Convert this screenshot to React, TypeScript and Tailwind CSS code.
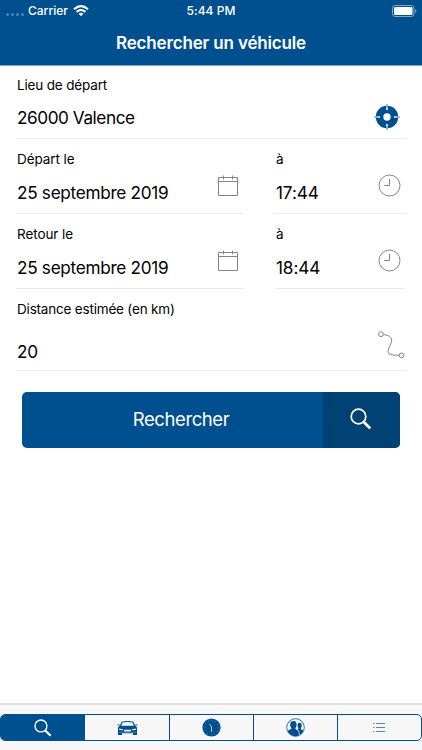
import React from 'react';

function Search({ size }: { size: number }) {
  return (
    <svg width={size} height={size} viewBox="0 0 22 22" fill="none" stroke="white">
      <circle cx="8.5" cy="8.5" r="7.3" strokeWidth="1.7" />
      <path d="M13.800 14 20.300 20.500" strokeWidth="2.7" />
    </svg>
  );
}

function Calendar() {
  return (
    <svg width="21" height="21" viewBox="0 0 21 21" fill="none" stroke="#858585" strokeWidth="1">
      <path d="M.5 2.500h19v18H.5zM.5 6.500h19M5.500 .5v4M14.500 .5v4" />
    </svg>
  );
}

function Clock() {
  return (
    <svg width="23" height="23" viewBox="0 0 23 23" fill="none" stroke="#858585" strokeWidth="1">
      <circle cx="11.5" cy="11.5" r="10.500" />
      <path d="M11.500 5v6.500H6.300" />
    </svg>
  );
}

function DateRow({ label, time }: { label: string; time: string }) {
  return (
    <div className="flex h-[75px] justify-between">
      <div className="flex h-[75px] w-[227px] justify-between border-b border-[#e9e9e9]">
        <div className="pl-px">
          <div className="pt-[10px] text-[13.500px] leading-5 tracking-[-0.08px]">{label}</div>
          <div className="pt-[12px] text-[17.200px] leading-6 tracking-[-0.3px]">25 septembre 2019</div>
        </div>
        <div className="pr-1 pt-[36px]"><Calendar /></div>
      </div>
      <div className="flex h-[75px] w-[130px] justify-between border-b border-[#e9e9e9]">
        <div className="pl-px">
          <div className="pt-[10px] text-[13.500px] leading-5">à</div>
          <div className="pt-[12px] text-[17.200px] leading-6 tracking-[-0.12px]">{time}</div>
        </div>
        <div className="pr-1 pt-[35px]"><Clock /></div>
      </div>
    </div>
  );
}

export default function App() {
  return (
    <div className="flex h-[750px] w-[422px] flex-col overflow-hidden bg-white font-['Inter',sans-serif] text-black">
      <header className="h-[66px] shrink-0 border-b border-[#7da4c4] bg-[#00508f] text-white">
        <div className="grid h-[21px] grid-cols-3 items-center text-[12px] font-medium">
          <div className="flex items-center pl-[6px]">
            <div className="mr-1 flex gap-[2px] pt-[7px]">
              <i className="size-[3px] rounded-full bg-[#4c83b0]" />
              <i className="size-[3px] rounded-full bg-[#4c83b0]" />
              <i className="size-[3px] rounded-full bg-[#4c83b0]" />
              <i className="size-[3px] rounded-full bg-[#4c83b0]" />
            </div>
            <span>Carrier</span>
            <svg className="ml-[5px]" width="16" height="12" viewBox="0 0 16 12" fill="none" stroke="white" strokeWidth="2.1">
              <path d="M1 4.200q7-6.100 14 0M3.600 6.900q4.400-3.800 8.800 0" />
              <path d="M5.600 8.800q2.400-2 4.800 0L8 11.300z" fill="white" stroke="none" />
            </svg>
          </div>
          <div className="text-center tracking-[0.050px]">5:44 PM</div>
          <div className="flex justify-end pr-[5px]">
            <svg width="25" height="12" viewBox="0 0 25 12">
              <rect x=".5" y=".5" width="21.5" height="11" rx="2.7" fill="none" stroke="#85a9c7" />
              <rect x="2" y="2" width="18.5" height="8" rx="1.3" fill="white" />
              <path d="M23.200 4q2.400 2 0 4z" fill="#85a9c7" />
            </svg>
          </div>
        </div>
        <h1 className="pt-[10px] text-center text-[17px] font-semibold leading-6 tracking-[-0.16px]">Rechercher un véhicule</h1>
      </header>

      <main className="flex-1 pl-4 pr-4">
        <div className="flex h-[73px] w-[389px] justify-between border-b border-[#e9e9e9]">
          <div className="pl-px">
            <div className="pt-[9px] text-[13.500px] leading-5 tracking-[-0.16px]">Lieu de départ</div>
            <div className="pt-[11px] text-[17.200px] leading-6 tracking-[-0.440px]">26000 Valence</div>
          </div>
          <svg className="mr-[5px] mt-[38px]" width="26" height="26" viewBox="0 0 26 26">
            <circle cx="13" cy="13" r="11.200" fill="#00508f" />
            <circle cx="13" cy="13" r="3.700" fill="white" />
            <path d="M13 1.500v4.500M13 20v4.500M1.500 13H6M20 13h4.500" stroke="white" strokeWidth="1.600" />
            <path d="M13 0v4M13 22v4M0 13h4M22 13h4" stroke="#00508f" strokeWidth=".7" />
          </svg>
        </div>
        <div className="w-[389px]">
          <DateRow label="Départ le" time="17:44" />
          <DateRow label="Retour le" time="18:44" />
        </div>
        <div className="flex h-[82px] w-[389px] justify-between border-b border-[#e9e9e9]">
          <div className="pl-px">
            <div className="pt-[10px] text-[13.500px] leading-5 tracking-[-0.190px]">Distance estimée (en km)</div>
            <div className="pt-[21px] text-[17.200px] leading-6 tracking-[-0.300px]">20</div>
          </div>
          <svg className="mt-[42px]" width="27" height="28" viewBox="0 0 27 28" fill="none" stroke="#858585">
            <circle cx="3" cy="3.200" r="2.400" />
            <circle cx="23.600" cy="24.400" r="2.400" />
            <path d="M5.500 3.500c7 1 9.800 3.800 7.200 9.600-3 5.500-4.800 10.800 2.700 10.800l5.800.5" />
          </svg>
        </div>
        <button className="ml-[6px] mt-[21px] flex h-[56px] w-[378px] overflow-hidden rounded-[5px] bg-[#00508f] text-white">
          <span className="flex h-full w-[301px] items-center justify-center pl-[17px] text-[18.500px] tracking-[-0.420px]">Rechercher</span>
          <span className="flex h-full flex-1 items-center justify-center bg-[#004274] pb-[3px] pr-px"><Search size={22} /></span>
        </button>
      </main>

      <nav className="h-[47px] shrink-0 border-t-2 border-[#dfdfdf] bg-[#f7f7f7] pt-[9px]">
        <div className="flex h-[27px] overflow-hidden rounded-[5px] border border-[#00508f]">
          <div className="flex w-[84px] items-center justify-center bg-[#00508f]"><Search size={18} /></div>
          <div className="flex w-[84px] items-center justify-center">
            <svg width="21" height="16" viewBox="0 0 21 16">
              <path d="M4.700 1.700Q10.500.300 16.300 1.700L18.200 5.500 20 7.500V15h-4v-1.700H5V15H1V7.500l1.800-2z" fill="#00508f" />
              <path d="M5.600 2.600q4.900-1 9.800 0l1.500 3.200H4.100zM2 8.500l3.600.7.500 1-3.600-.3zM19 8.500l-3.600.7-.5 1 3.600-.3zM6.700 9.800h7.600l-.8 1.800h-6z" fill="#f7f7f7" />
              <path d="M.5 5h2.200M18.300 5h2.200" stroke="#00508f" />
              <path d="M2 12.300h17" stroke="#7ba1c2" strokeWidth=".6" />
            </svg>
          </div>
          <div className="flex w-[84px] items-center justify-center border-l border-[#00508f]">
            <svg className="-ml-px" width="19" height="19" viewBox="0 0 19 19" fill="none">
              <circle cx="9.500" cy="9.500" r="9.100" fill="#00508f" />
              <circle cx="9.500" cy="9.500" r="7.200" stroke="#a8c4da" strokeWidth=".8" strokeDasharray=".6 3.170" />
              <path d="M7.500 6 9.500 9v5" stroke="#c4d7e6" strokeWidth=".9" />
            </svg>
          </div>
          <div className="flex w-[84px] items-center justify-center border-l border-[#00508f]">
            <svg className="-ml-px" width="19" height="19" viewBox="0 0 19 19">
              <circle cx="9.500" cy="9.500" r="8.800" fill="none" stroke="#00508f" strokeWidth=".8" />
              <path d="M7.600 3c2.300 0 3.200 1.600 2.900 4.200-.1 1.400-.7 2.300-1.200 3 .2 1.700 3.300 1.800 3.500 4.300l.1 3A8.700 8.700 0 0 1 1.600 13c.8-1.300 3.800-1.300 4-2.700-1-1-1.400-2.200-1.400-3.700C4.200 4 5.500 3 7.600 3" fill="#00508f" />
              <path d="M13.400 4.800c1.900 0 2.600 1.400 2.300 3.400-.1 1-.6 1.800-1 2.300.2 1 2 1.300 2.600 2.200-.8 1.900-2 3.200-3.700 4 0-3.300-.8-4.300-2.300-5.400.9-.3 1.100-.6 1.200-1.100-1.500-2-1.400-5.400.9-5.400" fill="#00508f" />
            </svg>
          </div>
          <div className="flex flex-1 items-center justify-center border-l border-[#00508f]">
            <svg className="-ml-[2px] -mt-px" width="12" height="11" viewBox="0 0 12 11" stroke="#5686b1">
              <path d="M0 1.500h1.500M3 1.500h9M0 5.500h1.500M3 5.500h9M0 9.500h1.500M3 9.500h9" />
            </svg>
          </div>
        </div>
      </nav>
    </div>
  );
}
